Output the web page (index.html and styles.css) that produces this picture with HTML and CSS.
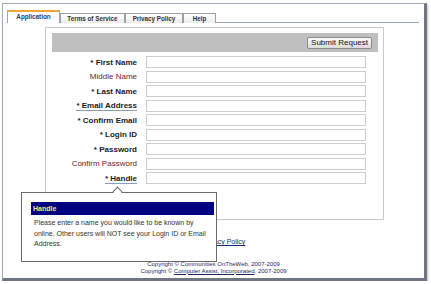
FILE: index.html
```html
<!DOCTYPE html>
<html lang="en">
<head>
    <meta charset="UTF-8">
    <meta name="viewport" content="width=device-width, initial-scale=1.0">
    <title>Register</title>
    <link rel="stylesheet" href="styles.css">
</head>
<body>
    <div class="frame">
        <!-- Tabs -->
        <div class="tabs">
            <a href="#" class="tab active">Application</a>
            <a href="#" class="tab t-terms">Terms of Service</a>
            <a href="#" class="tab t-privacy">Privacy Policy</a>
            <a href="#" class="tab t-help">Help</a>
        </div>

        <!-- Application form -->
        <div class="panel">
            <div class="formbox">
                <div class="toolbar">
                    <button type="button" class="submit">Submit Request</button>
                </div>
                <div class="fields">
                    <label class="req">* First Name</label><input type="text">
                    <label class="opt">Middle Name</label><input type="text">
                    <label class="req">* Last Name</label><input type="text">
                    <label class="req"><span class="help">* Email Address</span></label><input type="text">
                    <label class="req">* Confirm Email</label><input type="text">
                    <label class="req">* Login ID</label><input type="text">
                    <label class="req">* Password</label><input type="password">
                    <label class="opt">Confirm Password</label><input type="password">
                    <label class="req"><span class="help">* Handle</span></label><input type="text">
                </div>
            </div>
        </div>

        <!-- Footer -->
        <div class="footer">
            <p class="links"><a href="#">Help</a> | <a href="#">Privacy Policy</a></p>
            <p class="copy">Copyright &copy; Communities OnTheWeb, 2007-2009</p>
            <p class="copy">Copyright &copy; <a href="#">Computer Assist, Incorporated</a>, 2007-2009</p>
        </div>

        <!-- Help tooltip for Handle -->
        <div class="tip">
            <div class="tip-title">Handle</div>
            <div class="tip-body">Please enter a name you would like to be known by<br>online. Other users will NOT see your Login ID or Email<br>Address.</div>
        </div>
    </div>
</body>
</html>
```

FILE: styles.css
```css
/* General */
body {
    margin: 0;
    padding: 0;
    background: #ffffff;
    font-family: "Liberation Sans", Arial, sans-serif;
    color: #222;
}

.frame {
    position: relative;
    margin: 3px 0 0 2px;
    width: 421px;
    height: 274px;
    border: 1px solid #a3adba;
    border-right: 3px solid #6f7782;
    border-bottom: 3px solid #6f7782;
    box-shadow: 1px 1px 2px rgba(0, 0, 0, 0.25);
    background: #fff;
}

/* Tabs */
.tabs {
    display: flex;
    align-items: flex-end;
    height: 12px;
    margin: 6px 5px 0 4px;
    border-bottom: 1px solid #9aa6b6;
}

.tab {
    display: block;
    box-sizing: border-box;
    height: 10px;
    margin-bottom: -1px;
    border: 1px solid #a0a0a0;
    border-bottom: none;
    background: linear-gradient(#ffffff, #ececec);
    font-size: 6.3px;
    font-weight: bold;
    line-height: 9px;
    text-align: center;
    color: #333;
    text-decoration: none;
}

.tab.active {
    width: 53px;
    height: 13px;
    border-color: #9aa6b6;
    border-top: 2px solid #f0a63a;
    background: #fff;
    color: #1f3b78;
    line-height: 10px;
}

.t-terms { width: 65px; }
.t-privacy { width: 58px; }
.t-help { width: 33px; }

/* Form box */
.panel {
    display: flex;
    padding: 4px 0 0 42px;
}

.formbox {
    box-sizing: border-box;
    width: 339px;
    height: 193px;
    border: 1px solid #c9c9c9;
}

.toolbar {
    display: flex;
    justify-content: flex-end;
    align-items: center;
    height: 19px;
    margin: 5px 5px 0 6px;
    padding-right: 6px;
    background: #bfbfbf;
}

.submit {
    height: 12px;
    padding: 0 3px;
    border: 1px solid #8c8c8c;
    border-radius: 2px;
    background: linear-gradient(#fafafa, #dcdcdc);
    font-family: "Liberation Sans", Arial, sans-serif;
    font-size: 8px;
    line-height: 10px;
    color: #111;
}

.fields {
    display: grid;
    grid-template-columns: 91px 220px;
    column-gap: 9px;
    row-gap: 2.5px;
    margin-top: 4px;
    align-items: center;
}

.fields label {
    font-size: 8px;
    text-align: right;
    white-space: nowrap;
}

.fields .req {
    font-weight: bold;
    color: #1c1c1c;
}

.fields .opt {
    color: #6e2424;
}

.help {
    border-bottom: 1px solid #9199bb;
}

.fields input {
    box-sizing: border-box;
    height: 12px;
    margin: 0;
    border: 1px solid #cdcdcd;
    background: #fff;
}

/* Footer */
.footer {
    text-align: center;
    color: #1d2a66;
}

.footer p {
    margin: 0;
}

.footer a {
    color: #1d2a66;
}

.links {
    margin-top: 17px !important;
    font-size: 7px;
    line-height: 9px;
}

.copy {
    font-size: 6px;
    line-height: 6.5px;
}

.links + .copy {
    margin-top: 15px !important;
}

/* Tooltip */
.tip {
    position: absolute;
    left: 18px;
    top: 188px;
    box-sizing: border-box;
    width: 196px;
    height: 70px;
    padding: 9px 2px 0 9px;
    border: 1px solid #6a6a6a;
    background: #fff;
}

.tip::before {
    content: "";
    position: absolute;
    left: 92px;
    top: -5px;
    width: 6px;
    height: 6px;
    border-left: 1px solid #6a6a6a;
    border-top: 1px solid #6a6a6a;
    background: #fff;
    transform: rotate(45deg);
}

.tip-title {
    height: 13px;
    padding-left: 2px;
    background: #000080;
    color: #f2ee6a;
    font-size: 7px;
    font-weight: bold;
    line-height: 13px;
}

.tip-body {
    padding: 3px 0 0 3px;
    font-size: 7px;
    line-height: 10.5px;
    color: #333;
}
```
